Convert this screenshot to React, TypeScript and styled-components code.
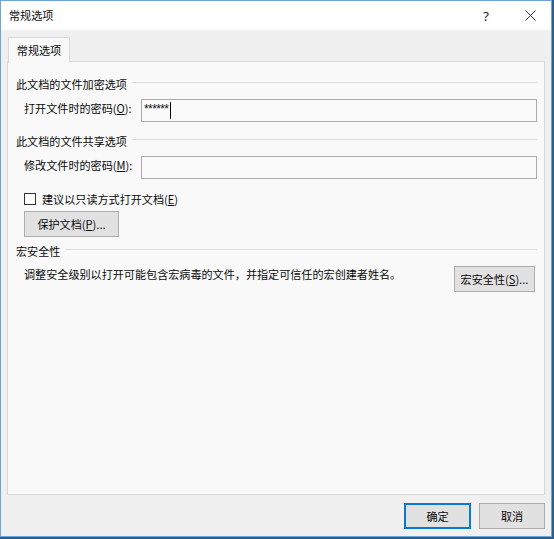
import React from "react";
import styled, { createGlobalStyle } from "styled-components";

const Global = createGlobalStyle`
  html, body { margin: 0; padding: 0; }
  body {
    background: #2c5e8e;
    width: 554px;
    height: 539px;
    overflow: hidden;
    font-family: "Noto Sans CJK SC", "Noto Sans", sans-serif;
    font-size: 11.1px;
    color: #0a0a0a;
  }
`;

const Window = styled.div`
  box-sizing: border-box;
  width: 552px;
  height: 537px;
  border: 1px solid #6fa5d6;
  background: #f0f0f0;
  display: flex;
  flex-direction: column;
`;

const TitleBar = styled.div`
  height: 29px;
  flex: none;
  background: #ffffff;
  display: flex;
  align-items: center;
  padding-left: 8px;
  line-height: 16px;
`;

const TitleText = styled.div`
  flex: 1;
  margin-top: -1px;
`;

const TitleButton = styled.div<{ $w: number }>`
  width: ${(p) => p.$w}px;
  height: 29px;
  display: flex;
  align-items: center;
  justify-content: center;
  font-family: "Noto Sans", sans-serif;
  font-size: 13px;
  color: #222;
`;

const Body = styled.div`
  flex: 1;
  display: flex;
  flex-direction: column;
  padding: 7px 6px 7px 6px;
  min-height: 0;
`;

const TabStrip = styled.div`
  display: flex;
  flex: none;
  height: 25px;
  margin-bottom: -1px;
  position: relative;
  z-index: 1;
`;

const Tab = styled.div`
  box-sizing: border-box;
  margin-left: 1px;
  width: 62px;
  height: 26px;
  background: #f9f9f9;
  border: 1px solid #d9d9d9;
  border-bottom: none;
  display: flex;
  align-items: center;
  justify-content: center;
  line-height: 16px;
  padding-bottom: 2px;
`;

const Panel = styled.div`
  flex: 1;
  box-sizing: border-box;
  background: #f9f9f9;
  border: 1px solid #d9d9d9;
  padding: 0 7px 0 8px;
  display: flex;
  flex-direction: column;
`;

const GroupHeader = styled.div<{ $mt: number }>`
  display: flex;
  align-items: flex-start;
  margin-top: ${(p) => p.$mt}px;
  line-height: 16px;
  height: 16px;
`;

const GroupRule = styled.div`
  flex: 1;
  height: 1px;
  background: #dcdcdc;
  margin: 6px 0 0 5px;
`;

const FieldRow = styled.div`
  display: flex;
  align-items: center;
  margin-top: 7px;
  padding-left: 8px;
  height: 23px;
`;

const FieldLabel = styled.div`
  width: 117px;
  flex: none;
  line-height: 16px;
  margin-top: -5px;
`;

const TextBox = styled.div`
  flex: 1;
  box-sizing: border-box;
  height: 23px;
  border: 1px solid #ababab;
  background: #fafafa;
  display: flex;
  align-items: center;
  padding-left: 2px;
`;

const Stars = styled.span`
  font-family: "Liberation Sans", sans-serif;
  font-size: 12px;
  letter-spacing: -0.6px;
  margin-top: -3px;
`;

const Caret = styled.span`
  width: 1px;
  height: 17px;
  background: #000;
  margin-left: 2px;
`;

const CheckRow = styled.label`
  display: flex;
  align-items: center;
  margin-top: 12px;
  padding-left: 8px;
  height: 16px;
  line-height: 16px;
`;

const CheckBox = styled.span`
  box-sizing: border-box;
  width: 12px;
  height: 12px;
  border: 1px solid #333;
  background: #fff;
  margin-right: 6px;
`;

const Button = styled.div<{ $w: number; $default?: boolean }>`
  box-sizing: border-box;
  width: ${(p) => p.$w}px;
  height: 26px;
  flex: none;
  background: #e1e1e1;
  border: ${(p) => (p.$default ? "2px solid #0a78d4" : "1px solid #adadad")};
  display: flex;
  align-items: center;
  justify-content: center;
  line-height: 16px;
`;

const ButtonRow = styled.div<{ $mt: number }>`
  display: flex;
  margin-top: ${(p) => p.$mt}px;
  padding-left: 8px;
`;

const DescRow = styled.div`
  display: flex;
  align-items: flex-start;
  margin-top: 7px;
  padding-left: 8px;
  padding-right: 2px;
`;

const DescText = styled.div`
  flex: 1;
  line-height: 16px;
`;

const Footer = styled.div`
  display: flex;
  justify-content: flex-end;
  gap: 8px;
  margin-top: 8px;
  flex: none;
`;

const U = styled.span`
  text-decoration: underline;
  text-underline-offset: 1px;
`;

export default function App() {
  return (
    <>
      <Global />
      <Window>
        <TitleBar>
          <TitleText>常规选项</TitleText>
          <TitleButton $w={46}>?</TitleButton>
          <TitleButton $w={42}>
            <svg width="11" height="11" viewBox="0 0 11 11">
              <path d="M0.5 0.5 L10.5 10.5 M10.5 0.5 L0.5 10.5" stroke="#333" strokeWidth="1" />
            </svg>
          </TitleButton>
        </TitleBar>
        <Body>
          <TabStrip>
            <Tab>常规选项</Tab>
          </TabStrip>
          <Panel>
            <GroupHeader $mt={14}>
              <span>此文档的文件加密选项</span>
              <GroupRule />
            </GroupHeader>
            <FieldRow>
              <FieldLabel>
                打开文件时的密码(<U>O</U>):
              </FieldLabel>
              <TextBox>
                <Stars>******</Stars>
                <Caret />
              </TextBox>
            </FieldRow>
            <GroupHeader $mt={11}>
              <span>此文档的文件共享选项</span>
              <GroupRule />
            </GroupHeader>
            <FieldRow>
              <FieldLabel>
                修改文件时的密码(<U>M</U>):
              </FieldLabel>
              <TextBox />
            </FieldRow>
            <CheckRow>
              <CheckBox />
              <span>
                建议以只读方式打开文档(<U>E</U>)
              </span>
            </CheckRow>
            <ButtonRow $mt={4}>
              <Button $w={95}>
                保护文档(<U>P</U>)...
              </Button>
            </ButtonRow>
            <GroupHeader $mt={6}>
              <span>宏安全性</span>
              <GroupRule />
            </GroupHeader>
            <DescRow>
              <DescText>调整安全级别以打开可能包含宏病毒的文件，并指定可信任的宏创建者姓名。</DescText>
              <Button $w={81}>
                宏安全性(<U>S</U>)...
              </Button>
            </DescRow>
          </Panel>
          <Footer>
            <Button $w={67} $default>
              确定
            </Button>
            <Button $w={66}>取消</Button>
          </Footer>
        </Body>
      </Window>
    </>
  );
}
